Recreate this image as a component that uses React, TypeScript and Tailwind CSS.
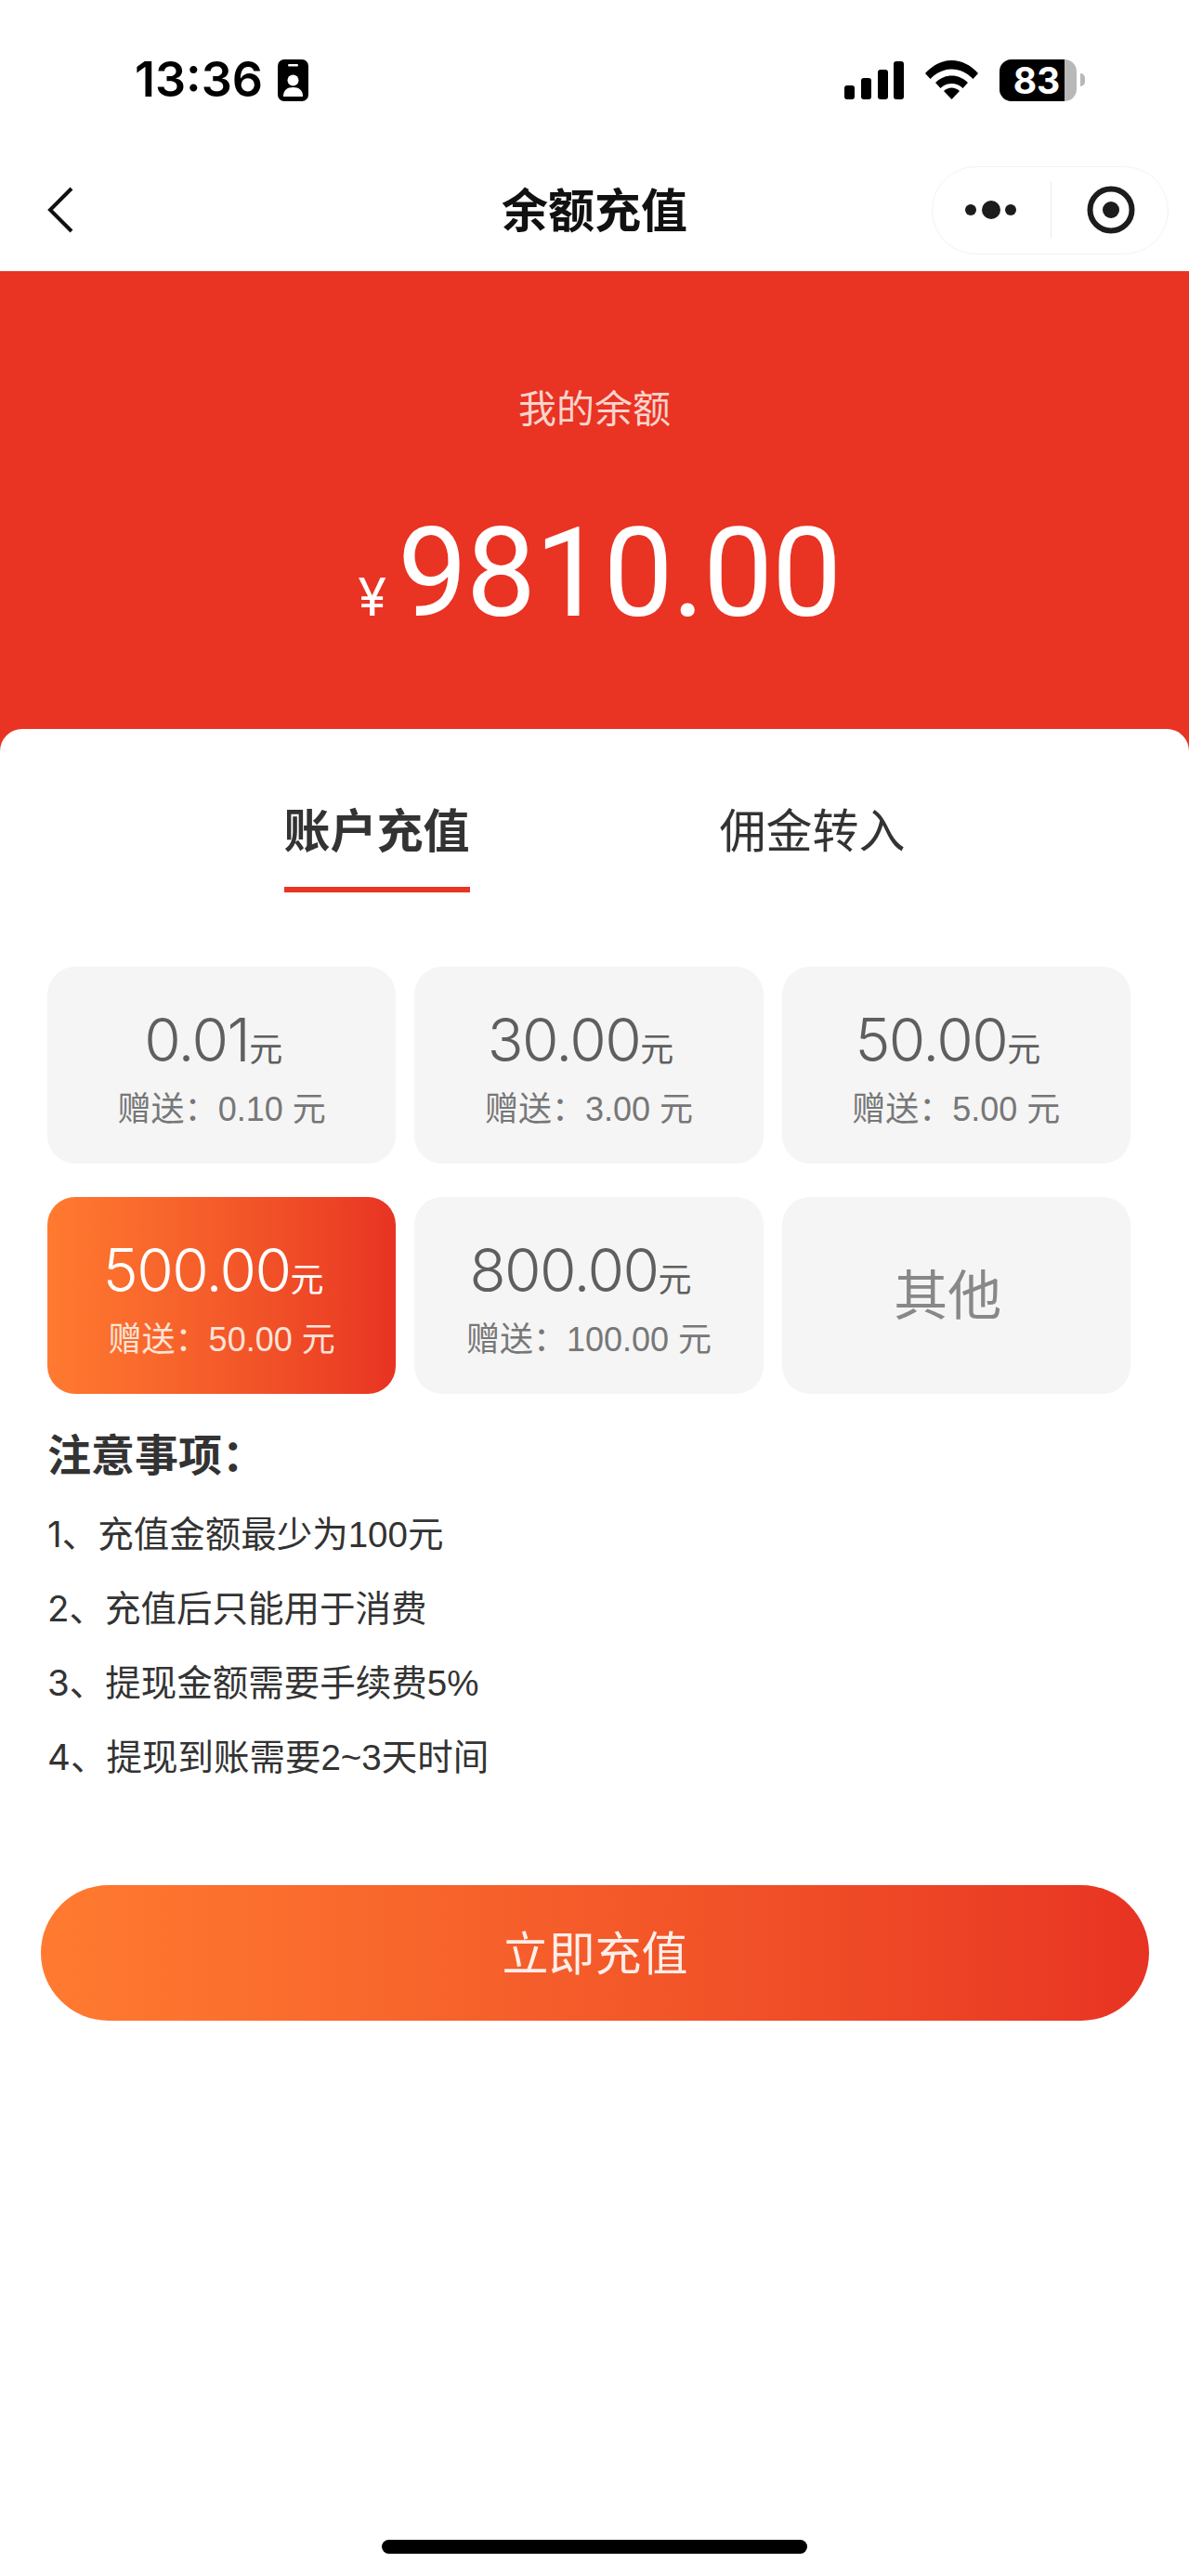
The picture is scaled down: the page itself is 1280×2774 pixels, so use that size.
const sans = "font-['Inter','Noto_Sans_CJK_SC',sans-serif]";
const latin = "font-['Liberation_Sans','Noto_Sans_CJK_SC',sans-serif]";

const amounts = [
  { value: "0.01", gift: "0.10" },
  { value: "30.00", gift: "3.00" },
  { value: "50.00", gift: "5.00" },
  { value: "500.00", gift: "50.00", active: true },
  { value: "800.00", gift: "100.00" },
];

const notes = [
  "1、充值金额最少为100元",
  "2、充值后只能用于消费",
  "3、提现金额需要手续费5%",
  "4、提现到账需要2~3天时间",
];

function StatusBar() {
  return (
    <div className="flex h-[160px] items-center justify-between pt-[12px] pl-[145px] pr-[112px]">
      <div className="flex items-center gap-[16px]">
        <span className="font-['Inter',sans-serif] text-[52px] leading-[60px] font-semibold text-black">13:36</span>
        <svg width="33" height="45" viewBox="0 0 33 45">
          <rect width="33" height="45" rx="7" fill="#000" />
          <rect x="11" y="5" width="11" height="2.5" rx="1.2" fill="#fff" />
          <circle cx="16.5" cy="22.5" r="6" fill="#fff" />
          <path d="M6 40c0-7 4-10 10.500-10S27 33 27 40z" fill="#fff" />
        </svg>
      </div>
      <div className="flex items-center gap-[23px]">
        <svg width="64" height="41" viewBox="0 0 64 41">
          <rect x="0" y="26" width="11" height="15" rx="3" fill="#000" />
          <rect x="18" y="18" width="11" height="23" rx="3" fill="#000" />
          <rect x="36" y="9" width="11" height="32" rx="3" fill="#000" />
          <rect x="53" y="0" width="11" height="41" rx="3" fill="#000" />
        </svg>
        <svg width="57" height="42" viewBox="0 0 57 42">
          <path d="M0 14C8 5 18 0 28.500 0S49 5 57 14l-5.500 6C45 13.500 37 9.500 28.500 9.500S12 13.500 5.500 20z" fill="#000" />
          <path d="M11 24c5-5 11-7.500 17.500-7.500S41 19 46 24l-5.500 6c-3.500-3.500-7.500-5-12-5s-8.500 1.500-12 5z" fill="#000" />
          <path d="M20 33c2.500-2.200 5.300-3.500 8.500-3.500S34.500 30.800 37 33L28.500 42z" fill="#000" />
        </svg>
        <div className="flex items-center gap-[4px]">
          <div className="flex h-[45px] w-[83px] rounded-[13px] bg-[#b8b8b8]">
            <div className="flex w-[70px] items-center justify-center rounded-l-[13px] bg-black pl-[10px] font-['Inter',sans-serif] text-[39px] leading-[45px] font-bold text-white">83</div>
          </div>
          <div className="h-[14px] w-[5px] rounded-r-full bg-[#b8b8b8]" />
        </div>
      </div>
    </div>
  );
}

function NavBar() {
  return (
    <div className="grid h-[132px] grid-cols-[1fr_auto_1fr] items-center">
      <div className="pl-[51px]">
        <svg width="28" height="50" viewBox="0 0 28 50" fill="none" className="block">
          <path d="M26 2 3 25l23 23" stroke="#111" strokeWidth="4" />
        </svg>
      </div>
      <div className="pt-[2px] text-[50px] leading-[60px] font-bold text-[#111]">余额充值</div>
      <div className="flex justify-end pr-[22px]">
        <div className="flex h-[95px] w-[255px] items-center rounded-full border border-[#f3f3f3] bg-white">
          <div className="flex w-[127px] flex-none items-center justify-center">
            <svg width="60" height="20" viewBox="0 0 60 20">
              <circle cx="7" cy="10" r="6" fill="#1c1c1c" />
              <circle cx="29" cy="10" r="10" fill="#1c1c1c" />
              <circle cx="50" cy="10" r="6" fill="#1c1c1c" />
            </svg>
          </div>
          <div className="h-[61px] w-px bg-[#ececec]" />
          <div className="flex flex-1 items-center justify-center pl-[2px]">
            <svg width="52" height="52" viewBox="0 0 52 52">
              <circle cx="26" cy="26" r="22.500" fill="none" stroke="#1c1c1c" strokeWidth="6" />
              <circle cx="26" cy="26" r="9" fill="#1c1c1c" />
            </svg>
          </div>
        </div>
      </div>
    </div>
  );
}

function AmountCard({ value, gift, active }: { value: string; gift: string; active?: boolean }) {
  return (
    <div className={`flex h-[212px] flex-col items-center rounded-[30px] pt-[46px] ${active ? "bg-gradient-to-r from-[#ff7a30] to-[#e83323] text-white" : "bg-[#f5f5f5] text-[#5f5f5f]"}`}>
      <div className="flex items-baseline pr-[18px] leading-[66px]">
        <span className="text-[64px] font-light tracking-[-1.500px]">{value}</span>
        <span className="text-[36px]">元</span>
      </div>
      <div className={`mt-[9px] text-[36px] leading-[46px] ${latin} ${active ? "text-[#fde3d8]" : "text-[#777]"}`}>
        赠送：{gift} 元
      </div>
    </div>
  );
}

export default function App() {
  return (
    <div className={`flex min-h-[2774px] flex-col bg-white ${sans}`}>
      <StatusBar />
      <NavBar />

      <div className="h-[517px] bg-[#e93323] pt-[118px] text-center">
        <div className="text-[41px] leading-[60px] text-[#fad3cc]">我的余额</div>
        <div className="mt-[82px] flex items-baseline justify-center pl-[10px] text-white">
          <span className="mr-[12px] text-[56px] leading-[132px]">¥</span>
          <span className="font-['Roboto',sans-serif] text-[134px] leading-[132px] font-normal tracking-[-1.500px]">9810.00</span>
        </div>
      </div>

      <div className="-mt-[24px] flex flex-1 flex-col rounded-t-[24px] bg-white">
        <div className="flex justify-center gap-[269px] pt-[80px]">
          <div className="flex flex-col">
            <span className="text-[50px] leading-[60px] font-bold text-[#333]">账户充值</span>
            <div className="mt-[30px] h-[6px] bg-[#e93323]" />
          </div>
          <span className="text-[50px] leading-[60px] text-[#333]">佣金转入</span>
        </div>

        <div className="mt-[80px] grid grid-cols-3 gap-x-[20px] gap-y-[36px] pl-[51px] pr-[63px]">
          {amounts.map((a) => (
            <AmountCard key={a.value} {...a} />
          ))}
          <div className="flex h-[212px] items-center justify-center rounded-[30px] bg-[#f5f5f5] pr-[18px] text-[58px] text-[#888]">其他</div>
        </div>

        <div className="mt-[36px] px-[51px] text-[#333]">
          <div className="text-[47px] leading-[60px] font-bold">注意事项：</div>
          <div className="mt-[15px]">
            {notes.map((n) => (
              <div key={n} className="h-[80px] text-[38.500px] leading-[80px]">
                {n[0]}
                <span className={latin}>{n.slice(1)}</span>
              </div>
            ))}
          </div>
        </div>

        <button className="ml-[44px] mr-[43px] mt-[98px] h-[146px] rounded-full bg-gradient-to-r from-[#ff7a30] to-[#e83323] pt-[2px] text-[50px] text-[#fdeee9]">
          立即充值
        </button>

        <div className="mt-auto flex justify-center pb-[24px]">
          <div className="h-[15px] w-[458px] rounded-full bg-black" />
        </div>
      </div>
    </div>
  );
}
